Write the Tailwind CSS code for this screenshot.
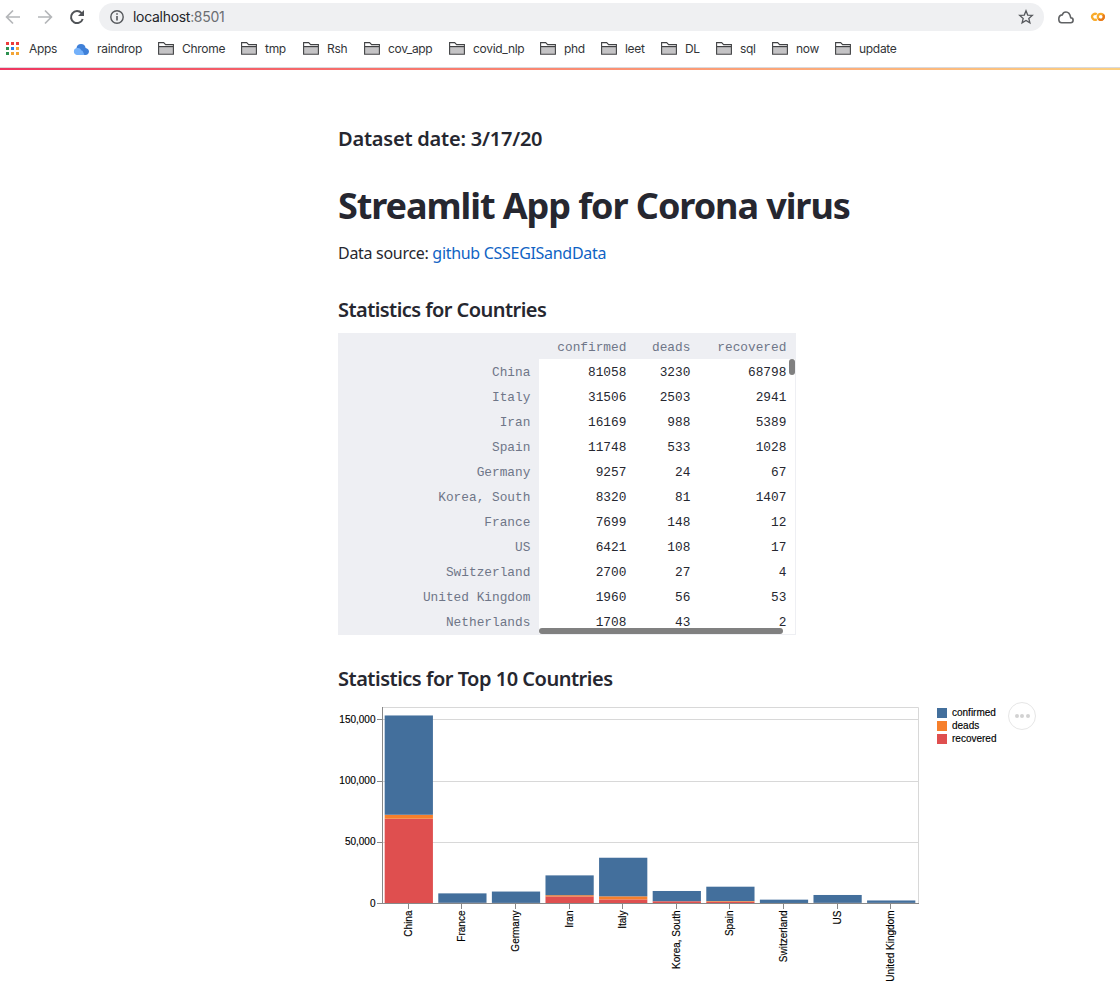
<!DOCTYPE html>
<html lang="en">
<head>
<meta charset="utf-8">
<title>Corona virus statistics</title>
<script src="https://cdn.jsdelivr.net/npm/@tailwindcss/browser@4"></script>
</head>
<body class="h-[1002px] w-[1120px] overflow-hidden bg-white font-['Noto_Sans',sans-serif] text-[#262730]">
<svg class="hidden">
  <symbol id="folder" viewBox="0 0 16 13"><path d="M.6 12.3V.6h5.2l1.700 2h7.900v9.700z" fill="#fff"/><path d="M1 5.200h14v6.800H1z" fill="#c4c3c5"/><path d="M.6 12.300V.6h5.100l1.900 2h7.800v9.700zM.6 4.600h14.800" fill="none" stroke="#414244" stroke-width="1.1"/></symbol>
</svg>
<header class="font-['Inter',sans-serif]">
  <div class="flex h-[34px] items-center">
    <svg class="h-[34px] w-[99px] shrink-0" viewBox="0 0 99 34" fill="none">
      <path d="M20 17H7M13 10.5 6.6 17l6.4 6.5" stroke="#b4b6b9" stroke-width="1.7"/>
      <path d="M38 17h13M45 10.5l6.4 6.5-6.4 6.5" stroke="#b4b6b9" stroke-width="1.7"/>
      <path d="M81.6 13.2A6 6 0 1 0 82.7 19" stroke="#505357" stroke-width="2"/><path d="M84 10v6h-6z" fill="#505357"/>
    </svg>
    <div class="flex h-7 w-[945px] items-center rounded-full bg-[#eff0f2] pr-[10px] pl-[11px]">
      <svg class="size-[14px]" viewBox="0 0 14 14" fill="none" stroke="#55585c"><circle cx="7" cy="7" r="6.2" stroke-width="1.4"/><path d="M7 6v4.5M7 3.3v1.5" stroke-width="1.6"/></svg>
      <div class="ml-[9px] grow text-[14px] leading-4 tracking-[-0.3px] text-[#6b6e72]"><span class="text-[#232529]">localhost</span>:8501</div>
      <svg class="size-4" viewBox="0 0 16 16" fill="none" stroke="#55585c" stroke-width="1.3"><path d="M8 1.8l1.7 4.3 4.6.3-3.5 3 1.1 4.5L8 11.4l-3.9 2.5 1.1-4.5-3.5-3 4.6-.3z"/></svg>
    </div>
    <svg class="ml-[14px] h-[13px] w-4" viewBox="0 0 16 13" fill="none" stroke="#606264" stroke-width="1.6"><path d="M3.8 11.7h8.7a2.5 2.5 0 0 0 .2-5C12 3 10.5 1 8 1 6 1 4.8 2.2 4.2 3.9 2 4.2.8 5.8.8 8c0 2.2 1.2 3.7 3 3.7z"/></svg>
    <svg class="ml-[16px] h-3 w-4" viewBox="0 0 16 12" fill="none" stroke-width="2.3"><path d="M6.8 3.3a3 3 0 1 0 0 5" stroke="#f9ab2a"/><circle cx="10.8" cy="5.8" r="3" stroke="#f9ab2a"/><path d="M8.7 8a3 3 0 0 0 4.3-4.3" stroke="#e8791c"/></svg>
  </div>
  <nav class="flex h-[33px] items-center pb-1 pl-1.5 text-[12px] leading-4 tracking-[-0.3px] text-[#333538]">
    <div class="flex w-[67px] items-center gap-[10px]">
      <svg class="size-[13px]" viewBox="0 0 13 13"><path d="M0 0h3v3H0zM5 0h3v3H5zM10 0h3v3h-3z" fill="#ec3b3b"/><path d="M0 5h3v3H0zM0 10h3v3H0z" fill="#2d9150"/><path d="M5 5h3v3H5z" fill="#2a7de9"/><path d="M10 5h3v3h-3zM5 10h3v3H5zM10 10h3v3h-3z" fill="#f3a536"/></svg>
      <span>Apps</span>
    </div>
    <div class="flex w-[85px] items-center gap-2">
      <svg class="h-3 w-4" viewBox="0 0 16 12"><path d="M3.5 5a4.6 4.6 0 0 1 9.1 0c2 .4 3.4 1.7 3.4 3.5S14.5 12 12.5 12H4z" fill="#3f80d8"/><path d="M3.8 5.1c3-.6 4 1.1 4.3 2.1 2 .2 2.6 3.3 3.4 4.8H3.8a3.5 3.5 0 0 1 0-6.9z" fill="#74b1fa"/></svg>
      <span>raindrop</span>
    </div>
    <div class="flex w-[83px] items-center gap-2"><svg class="h-[13px] w-4"><use href="#folder"/></svg><span>Chrome</span></div>
    <div class="flex w-[62px] items-center gap-2"><svg class="h-[13px] w-4"><use href="#folder"/></svg><span>tmp</span></div>
    <div class="flex w-[61px] items-center gap-2"><svg class="h-[13px] w-4"><use href="#folder"/></svg><span>Rsh</span></div>
    <div class="flex w-[85px] items-center gap-2"><svg class="h-[13px] w-4"><use href="#folder"/></svg><span>cov_app</span></div>
    <div class="flex w-[91px] items-center gap-2"><svg class="h-[13px] w-4"><use href="#folder"/></svg><span>covid_nlp</span></div>
    <div class="flex w-[61px] items-center gap-2"><svg class="h-[13px] w-4"><use href="#folder"/></svg><span>phd</span></div>
    <div class="flex w-[60px] items-center gap-2"><svg class="h-[13px] w-4"><use href="#folder"/></svg><span>leet</span></div>
    <div class="flex w-[55px] items-center gap-2"><svg class="h-[13px] w-4"><use href="#folder"/></svg><span>DL</span></div>
    <div class="flex w-[56px] items-center gap-2"><svg class="h-[13px] w-4"><use href="#folder"/></svg><span>sql</span></div>
    <div class="flex w-[63px] items-center gap-2"><svg class="h-[13px] w-4"><use href="#folder"/></svg><span>now</span></div>
    <div class="flex items-center gap-2"><svg class="h-[13px] w-4"><use href="#folder"/></svg><span>update</span></div>
  </nav>
  <div class="h-px bg-[#d9dade]"></div>
  <div class="h-0.5 bg-linear-to-r from-[#ee3560] via-[#fa8a72] to-[#fbd083]"></div>
</header>

<main class="ml-[338px] w-[700px]">
  <h3 class="mt-[54px] text-[20px] leading-[30px] font-semibold tracking-[-0.22px]">Dataset date: 3/17/20</h3>
  <h1 class="mt-[27px] text-[36px] leading-[50px] font-bold tracking-[-1.07px]">Streamlit App for Corona virus</h1>
  <p class="mt-[9px] text-[16px] leading-[26px] tracking-[-0.3px]">Data source: <a class="text-[#0f63c4]">github CSSEGISandData</a></p>
  <h3 class="mt-[29px] text-[20px] leading-[30px] font-semibold tracking-[-0.56px]">Statistics for Countries</h3>
  <div class="relative mt-2 h-[302px] w-[458px] border-r border-b border-[#eeeff3] font-['Liberation_Mono',monospace] text-[12.8px]">
    <div id="table" class="grid grid-cols-[201px_96px_64px_96px] text-right leading-[25px]"></div>
    <div class="absolute top-[26px] right-0 h-4 w-1.5 rounded-full bg-[#808080]"></div>
    <div class="absolute bottom-0 left-[201px] h-1.5 w-[244px] rounded-full bg-[#808080]"></div>
  </div>
  <h3 class="mt-[29px] text-[20px] leading-[30px] font-semibold tracking-[-0.49px]">Statistics for Top 10 Countries</h3>
  <div class="flex items-start">
    <svg id="chart" class="h-[300px] w-[590px] shrink-0 font-['Liberation_Sans',sans-serif] text-[10px]" viewBox="338 694 590 300"></svg>
    <div class="mt-[12px] ml-[9px] w-[71px] font-['Liberation_Sans',sans-serif] text-[10px] leading-[13px] text-black [-webkit-text-stroke:0.15px_black]">
      <div class="flex items-center gap-[5px]"><i class="size-2.5 bg-[#436f9c]"></i><span>confirmed</span></div>
      <div class="flex items-center gap-[5px]"><i class="size-2.5 bg-[#f67f2b]"></i><span>deads</span></div>
      <div class="flex items-center gap-[5px]"><i class="size-2.5 bg-[#df4f4f]"></i><span>recovered</span></div>
    </div>
    <div class="mt-2 flex size-7 items-center justify-center gap-[1.5px] rounded-full border border-[#e6e6e6]">
      <i class="size-[4px] rounded-full bg-[#d2d2d2]"></i><i class="size-[4px] rounded-full bg-[#d2d2d2]"></i><i class="size-[4px] rounded-full bg-[#d2d2d2]"></i>
    </div>
  </div>
</main>
<script>
const rows = [['China',81058,3230,68798],['Italy',31506,2503,2941],['Iran',16169,988,5389],['Spain',11748,533,1028],['Germany',9257,24,67],['Korea, South',8320,81,1407],['France',7699,148,12],['US',6421,108,17],['Switzerland',2700,27,4],['United Kingdom',1960,56,53],['Netherlands',1708,43,2]];
const head = 'h-[26px] bg-[#eeeff3] pr-[8.6px] pt-0.5 text-[#6f7688]';
let cells = ['', 'confirmed', 'deads', 'recovered'].map(t => `<div class="${head}">${t}</div>`).join('');
for (const [name, ...values] of rows) {
  cells += `<div class="h-[25px] bg-[#eeeff3] pt-px pr-[8.6px] text-[#6f7688]">${name}</div>`;
  cells += values.map(v => `<div class="h-[25px] pt-px pr-[8.6px] text-[#262730]">${v}</div>`).join('');
}
document.getElementById('table').innerHTML = cells;

const scale = 196 / 160000, step = 53.6;
let svg = '<path d="M382.5 707.5H918.5V903.5M382 719.5H918M382 781.5H918M382 842.5H918" fill="none" stroke="#d8d8d8"/>';
rows.slice(0, 10).sort((a, b) => a[0] < b[0] ? -1 : 1).forEach(([name, confirmed, deads, recovered], i) => {
  let y = 903;
  const x = 384.68 + i * step;
  [[recovered, '#df4f4f'], [deads, '#f67f2b'], [confirmed, '#436f9c']].forEach(([v, color]) => {
    y -= v * scale;
    svg += `<rect x="${x}" y="${y}" width="48.24" height="${v * scale}" fill="${color}"/>`;
  });
  const c = Math.round(382 + (i + 0.5) * step) - 0.5;
  svg += `<path d="M${c} 904v5" stroke="#888"/><text transform="translate(${c + 3} 910.5) rotate(-90)" text-anchor="end" stroke="#000" stroke-width=".15">${name}</text>`;
});
svg += '<path d="M382.5 707V904M382 903.5H919M377 719.5h5M377 781.5h5M377 842.5h5M377 903.5h5" fill="none" stroke="#888"/>';
[['150,000', 723], ['100,000', 784], ['50,000', 845], ['0', 907]].forEach(([t, y]) => { svg += `<text x="375.5" y="${y}" text-anchor="end" stroke="#000" stroke-width=".15">${t}</text>`; });
document.getElementById('chart').innerHTML = svg;
</script>
</body>
</html>
